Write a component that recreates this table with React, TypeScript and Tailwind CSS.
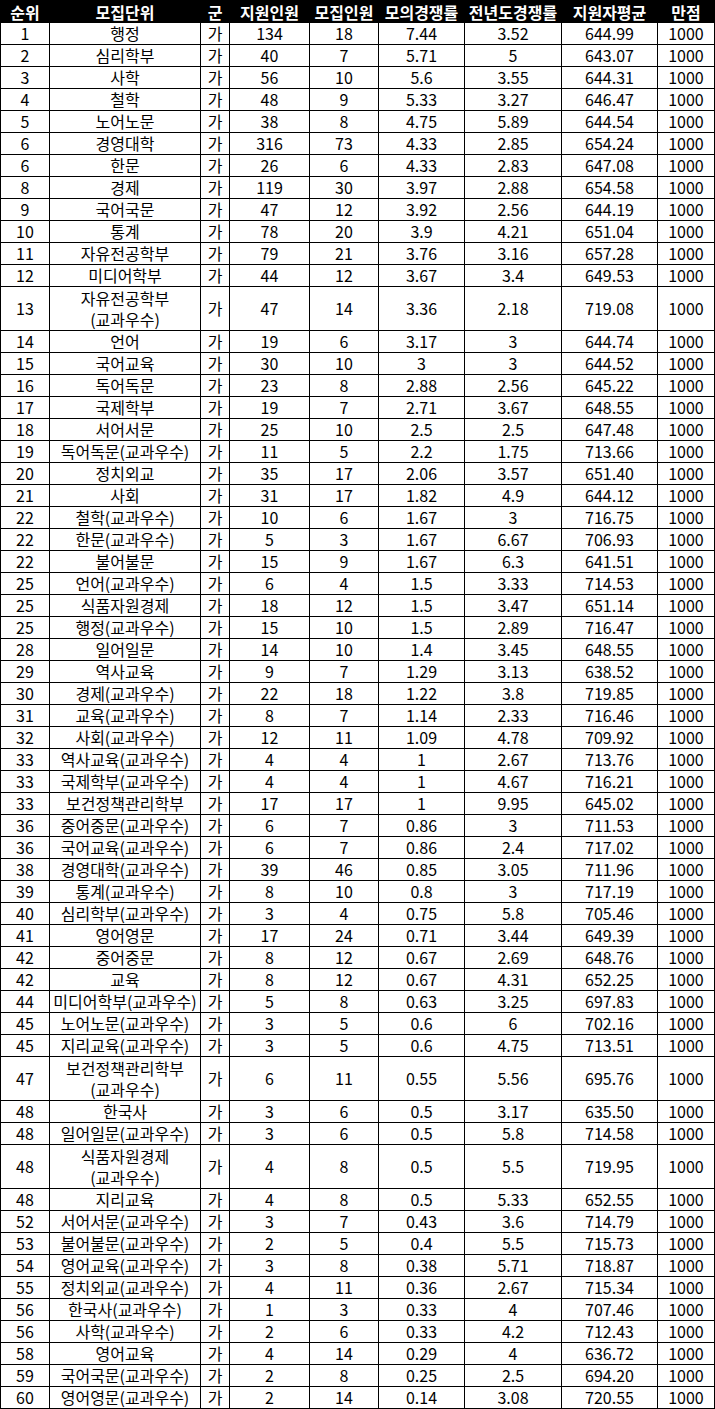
import React from "react";

type Row = [string, string, string, string, string, string, string, string, string];

const rows: Row[] = [
  ["1", "행정", "가", "134", "18", "7.44", "3.52", "644.99", "1000"],
  ["2", "심리학부", "가", "40", "7", "5.71", "5", "643.07", "1000"],
  ["3", "사학", "가", "56", "10", "5.6", "3.55", "644.31", "1000"],
  ["4", "철학", "가", "48", "9", "5.33", "3.27", "646.47", "1000"],
  ["5", "노어노문", "가", "38", "8", "4.75", "5.89", "644.54", "1000"],
  ["6", "경영대학", "가", "316", "73", "4.33", "2.85", "654.24", "1000"],
  ["6", "한문", "가", "26", "6", "4.33", "2.83", "647.08", "1000"],
  ["8", "경제", "가", "119", "30", "3.97", "2.88", "654.58", "1000"],
  ["9", "국어국문", "가", "47", "12", "3.92", "2.56", "644.19", "1000"],
  ["10", "통계", "가", "78", "20", "3.9", "4.21", "651.04", "1000"],
  ["11", "자유전공학부", "가", "79", "21", "3.76", "3.16", "657.28", "1000"],
  ["12", "미디어학부", "가", "44", "12", "3.67", "3.4", "649.53", "1000"],
  ["13", "자유전공학부\n(교과우수)", "가", "47", "14", "3.36", "2.18", "719.08", "1000"],
  ["14", "언어", "가", "19", "6", "3.17", "3", "644.74", "1000"],
  ["15", "국어교육", "가", "30", "10", "3", "3", "644.52", "1000"],
  ["16", "독어독문", "가", "23", "8", "2.88", "2.56", "645.22", "1000"],
  ["17", "국제학부", "가", "19", "7", "2.71", "3.67", "648.55", "1000"],
  ["18", "서어서문", "가", "25", "10", "2.5", "2.5", "647.48", "1000"],
  ["19", "독어독문(교과우수)", "가", "11", "5", "2.2", "1.75", "713.66", "1000"],
  ["20", "정치외교", "가", "35", "17", "2.06", "3.57", "651.40", "1000"],
  ["21", "사회", "가", "31", "17", "1.82", "4.9", "644.12", "1000"],
  ["22", "철학(교과우수)", "가", "10", "6", "1.67", "3", "716.75", "1000"],
  ["22", "한문(교과우수)", "가", "5", "3", "1.67", "6.67", "706.93", "1000"],
  ["22", "불어불문", "가", "15", "9", "1.67", "6.3", "641.51", "1000"],
  ["25", "언어(교과우수)", "가", "6", "4", "1.5", "3.33", "714.53", "1000"],
  ["25", "식품자원경제", "가", "18", "12", "1.5", "3.47", "651.14", "1000"],
  ["25", "행정(교과우수)", "가", "15", "10", "1.5", "2.89", "716.47", "1000"],
  ["28", "일어일문", "가", "14", "10", "1.4", "3.45", "648.55", "1000"],
  ["29", "역사교육", "가", "9", "7", "1.29", "3.13", "638.52", "1000"],
  ["30", "경제(교과우수)", "가", "22", "18", "1.22", "3.8", "719.85", "1000"],
  ["31", "교육(교과우수)", "가", "8", "7", "1.14", "2.33", "716.46", "1000"],
  ["32", "사회(교과우수)", "가", "12", "11", "1.09", "4.78", "709.92", "1000"],
  ["33", "역사교육(교과우수)", "가", "4", "4", "1", "2.67", "713.76", "1000"],
  ["33", "국제학부(교과우수)", "가", "4", "4", "1", "4.67", "716.21", "1000"],
  ["33", "보건정책관리학부", "가", "17", "17", "1", "9.95", "645.02", "1000"],
  ["36", "중어중문(교과우수)", "가", "6", "7", "0.86", "3", "711.53", "1000"],
  ["36", "국어교육(교과우수)", "가", "6", "7", "0.86", "2.4", "717.02", "1000"],
  ["38", "경영대학(교과우수)", "가", "39", "46", "0.85", "3.05", "711.96", "1000"],
  ["39", "통계(교과우수)", "가", "8", "10", "0.8", "3", "717.19", "1000"],
  ["40", "심리학부(교과우수)", "가", "3", "4", "0.75", "5.8", "705.46", "1000"],
  ["41", "영어영문", "가", "17", "24", "0.71", "3.44", "649.39", "1000"],
  ["42", "중어중문", "가", "8", "12", "0.67", "2.69", "648.76", "1000"],
  ["42", "교육", "가", "8", "12", "0.67", "4.31", "652.25", "1000"],
  ["44", "미디어학부(교과우수)", "가", "5", "8", "0.63", "3.25", "697.83", "1000"],
  ["45", "노어노문(교과우수)", "가", "3", "5", "0.6", "6", "702.16", "1000"],
  ["45", "지리교육(교과우수)", "가", "3", "5", "0.6", "4.75", "713.51", "1000"],
  ["47", "보건정책관리학부\n(교과우수)", "가", "6", "11", "0.55", "5.56", "695.76", "1000"],
  ["48", "한국사", "가", "3", "6", "0.5", "3.17", "635.50", "1000"],
  ["48", "일어일문(교과우수)", "가", "3", "6", "0.5", "5.8", "714.58", "1000"],
  ["48", "식품자원경제\n(교과우수)", "가", "4", "8", "0.5", "5.5", "719.95", "1000"],
  ["48", "지리교육", "가", "4", "8", "0.5", "5.33", "652.55", "1000"],
  ["52", "서어서문(교과우수)", "가", "3", "7", "0.43", "3.6", "714.79", "1000"],
  ["53", "불어불문(교과우수)", "가", "2", "5", "0.4", "5.5", "715.73", "1000"],
  ["54", "영어교육(교과우수)", "가", "3", "8", "0.38", "5.71", "718.87", "1000"],
  ["55", "정치외교(교과우수)", "가", "4", "11", "0.36", "2.67", "715.34", "1000"],
  ["56", "한국사(교과우수)", "가", "1", "3", "0.33", "4", "707.46", "1000"],
  ["56", "사학(교과우수)", "가", "2", "6", "0.33", "4.2", "712.43", "1000"],
  ["58", "영어교육", "가", "4", "14", "0.29", "4", "636.72", "1000"],
  ["59", "국어국문(교과우수)", "가", "2", "8", "0.25", "2.5", "694.20", "1000"],
  ["60", "영어영문(교과우수)", "가", "2", "14", "0.14", "3.08", "720.55", "1000"],
];

const headers = ["순위", "모집단위", "군", "지원인원", "모집인원", "모의경쟁률", "전년도경쟁률", "지원자평균", "만점"];

function App() {
  return (
    <div className="bg-white font-['Noto_Sans_CJK_KR',sans-serif] text-[16px] text-black">
      <table className="w-[714px] table-fixed border-collapse">
        <colgroup>
          <col className="w-[49px]" />
          <col className="w-[151px]" />
          <col className="w-[29px]" />
          <col className="w-[80px]" />
          <col className="w-[69px]" />
          <col className="w-[86px]" />
          <col className="w-[97px]" />
          <col className="w-[96px]" />
          <col className="w-[57px]" />
        </colgroup>
        <thead>
          <tr className="bg-black text-white">
            {headers.map((h) => (
              <th key={h} className="h-[22px] border border-black p-0 text-center font-bold leading-[20px] whitespace-nowrap">
                {h}
              </th>
            ))}
          </tr>
        </thead>
        <tbody>
          {rows.map((r, i) => {
            const tall = r[1].includes("\n");
            return (
              <tr key={i}>
                {r.map((c, j) => (
                  <td
                    key={j}
                    className={
                      (tall ? "h-[44px] leading-[21px] " : "h-[21px] leading-[21px] ") +
                      "border border-black p-0 text-center whitespace-pre-line"
                    }
                  >
                    {c}
                  </td>
                ))}
              </tr>
            );
          })}
        </tbody>
      </table>
    </div>
  );
}

export default App;
